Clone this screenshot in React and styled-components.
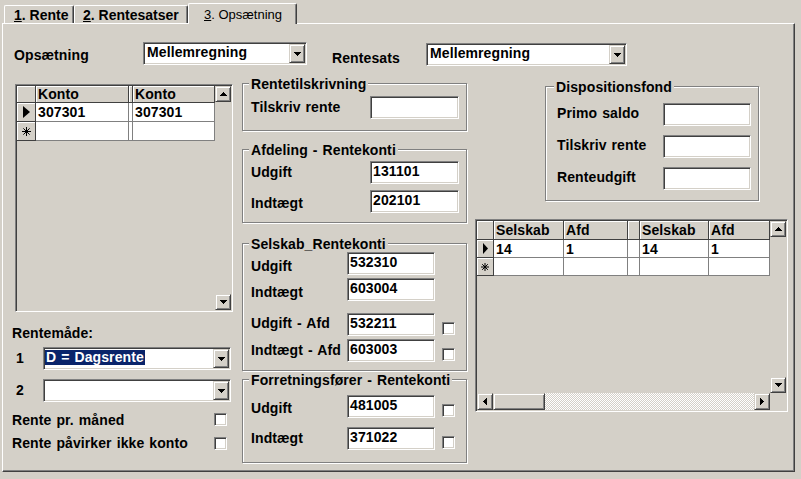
import React from 'react';
import styled, { createGlobalStyle, css } from 'styled-components';

const FACE = '#d4d0c8';

const GlobalStyle = createGlobalStyle`
  html, body {
    margin: 0;
    padding: 0;
    background: ${FACE};
  }
  body {
    font-family: "Liberation Sans", Arial, sans-serif;
    font-size: 14px;
    font-weight: bold;
    letter-spacing: 0.1px;
    word-spacing: 1px;
    color: #000;
  }
`;

// classic 3d borders
const sunken = css`
  box-sizing: border-box;
  border: 1px solid;
  border-color: #808080 #fff #fff #808080;
  box-shadow: inset 1px 1px 0 #404040, inset -1px -1px 0 ${FACE};
`;

const raised = css`
  box-sizing: border-box;
  border: 1px solid;
  border-color: ${FACE} #404040 #404040 ${FACE};
  box-shadow: inset 1px 1px 0 #fff, inset -1px -1px 0 #808080;
`;

const Screen = styled.div`
  width: 801px;
  height: 479px;
  overflow: hidden;
`;

/* Tabs */
const TabStrip = styled.div`
  display: flex;
  align-items: flex-end;
  height: 23px;
  padding-left: 4px;
  box-sizing: border-box;
  position: relative;
  z-index: 1;
`;

const Tab = styled.div`
  box-sizing: border-box;
  width: ${(p) => p.$w}px;
  height: ${(p) => (p.$active ? 21 : 18)}px;
  margin-bottom: ${(p) => (p.$active ? -1 : 0)}px;
  padding-left: ${(p) => p.$pl}px;
  background: ${FACE};
  border-left: 1px solid #fff;
  border-top: 1px solid #fff;
  border-right: 1px solid #404040;
  border-radius: 2px 2px 0 0;
  box-shadow: inset -1px 0 0 #808080;
  display: flex;
  align-items: center;
  white-space: nowrap;
  font-size: ${(p) => (p.$active ? 13 : 14)}px;
  font-weight: ${(p) => (p.$active ? 'normal' : 'bold')};
  letter-spacing: 0;
  word-spacing: 0;
`;

const Panel = styled.div`
  box-sizing: border-box;
  margin-left: 2px;
  width: 793px;
  height: 449px;
  border: 1px solid;
  border-color: #fff #404040 #404040 #fff;
  box-shadow: inset -1px -1px 0 #808080;
  display: flex;
  flex-direction: column;
`;

const TopRow = styled.div`
  display: flex;
  align-items: flex-start;
  height: 24px;
  margin-top: 18px;
  padding-left: 11px;
`;

const TopLabel = styled.div`
  width: ${(p) => p.$w}px;
  margin-top: ${(p) => p.$mt}px;
  margin-left: ${(p) => p.$ml || 0}px;
  line-height: 16px;
  white-space: nowrap;
  flex-shrink: 0;
`;

/* Combo box */
const Combo = styled.div`
  ${sunken};
  width: ${(p) => p.$w}px;
  height: 23px;
  margin-top: ${(p) => p.$mt || 0}px;
  padding: 1px;
  background: #fff;
  display: flex;
  align-items: stretch;
  flex-shrink: 0;
`;

const ComboText = styled.div`
  flex: 1;
  padding-top: 1px;
  padding-left: ${(p) => (p.$tight ? 0 : 2)}px;
  line-height: 15px;
  white-space: nowrap;
  overflow: hidden;
`;

const Selected = styled.span`
  display: inline-block;
  padding: 0 1px;
  background: #0a246a;
  color: #fff;
  line-height: 15px;
`;

const ArrowBtn = styled.div`
  ${raised};
  width: ${(p) => p.$w || 16}px;
  height: ${(p) => (p.$h ? `${p.$h}px` : 'auto')};
  background: ${FACE};
  display: flex;
  align-items: center;
  justify-content: center;
  flex-shrink: 0;
`;

const arrowPaths = {
  down: 'M0 0h7v1H0z M1 1h5v1H1z M2 2h3v1H2z M3 3h1v1H3z',
  up: 'M3 0h1v1H3z M2 1h3v1H2z M1 2h5v1H1z M0 3h7v1H0z',
  right: 'M0 0h1v7H0z M1 1h1v5H1z M2 2h1v3H2z M3 3h1v1H3z',
  left: 'M3 0h1v7H3z M2 1h1v5H2z M1 2h1v3H1z M0 3h1v1H0z',
};

function Arrow({ dir }) {
  const vertical = dir === 'up' || dir === 'down';
  return (
    <svg width={vertical ? 7 : 4} height={vertical ? 4 : 7} viewBox={vertical ? '0 0 7 4' : '0 0 4 7'}>
      <path d={arrowPaths[dir]} fill="#000" />
    </svg>
  );
}

function ComboBox({ width, value, selected, mt }) {
  return (
    <Combo $w={width} $mt={mt}>
      <ComboText $tight={selected}>
        {selected ? <Selected>{value}</Selected> : value}
      </ComboText>
      <ArrowBtn>
        <Arrow dir="down" />
      </ArrowBtn>
    </Combo>
  );
}

/* Columns */
const Columns = styled.div`
  display: flex;
  align-items: flex-start;
  padding-left: 9px;
`;

const LeftCol = styled.div`
  width: 221px;
  margin-top: 18px;
  display: flex;
  flex-direction: column;
`;

const MidCol = styled.div`
  width: 225px;
  margin-top: 17px;
  margin-left: 9px;
  display: flex;
  flex-direction: column;
`;

const RightCol = styled.div`
  width: 313px;
  margin-top: 20px;
  margin-left: 8px;
  display: flex;
  flex-direction: column;
`;

/* Data grid */
const GridFrame = styled.div`
  ${sunken};
  width: ${(p) => p.$w}px;
  height: ${(p) => p.$h}px;
  margin-left: ${(p) => p.$ml || 0}px;
  margin-top: ${(p) => p.$mt || 0}px;
  padding: 1px;
  background: ${FACE};
  display: grid;
  grid-template-columns: minmax(0, 1fr) 16px;
  grid-template-rows: ${(p) => (p.$hScroll ? 'minmax(0, 1fr) 17px' : 'minmax(0, 1fr)')};
`;

const GridTable = styled.div`
  display: flex;
  flex-direction: column;
  overflow: hidden;
`;

const GridRow = styled.div`
  display: flex;
  height: ${(p) => p.$h}px;
  flex-shrink: 0;
`;

const cellBase = css`
  box-sizing: border-box;
  width: ${(p) => (p.$w ? `${p.$w}px` : 'auto')};
  flex: ${(p) => (p.$w ? '0 0 auto' : '1 0 60px')};
  display: flex;
  align-items: center;
  padding-left: 2px;
  white-space: nowrap;
  overflow: hidden;
`;

const HeadCell = styled.div`
  ${cellBase};
  background: ${FACE};
  border-right: 1px solid #404040;
  border-bottom: 1px solid #404040;
  box-shadow: inset 1px 1px 0 #fff;
`;

const DataCell = styled.div`
  ${cellBase};
  background: #fff;
  border-right: 1px solid #808080;
  border-bottom: 1px solid #808080;
`;

const SelCell = styled.div`
  ${cellBase};
  padding-left: 0;
  justify-content: center;
  background: ${FACE};
  border-right: 1px solid #404040;
  border-bottom: 1px solid #404040;
  box-shadow: inset 1px 1px 0 #fff;
`;

const VScroll = styled.div`
  display: flex;
  flex-direction: column;
  background: ${FACE};
`;

const HScroll = styled.div`
  display: flex;
  background: ${FACE};
`;

const Track = styled.div`
  flex: 1;
  background: ${(p) =>
    p.$dither
      ? `repeating-conic-gradient(${FACE} 0% 25%, #fff 0% 50%) 0 0 / 2px 2px`
      : FACE};
`;

const Thumb = styled.div`
  ${raised};
  width: ${(p) => p.$w}px;
  background: ${FACE};
  flex-shrink: 0;
`;

const Corner = styled.div`
  background: ${FACE};
`;

function RowPointer({ w, h }) {
  return (
    <svg width={w} height={h} viewBox={`0 0 ${w} ${h}`}>
      <polygon points={`0,0 ${w},${h / 2} 0,${h}`} fill="#000" />
    </svg>
  );
}

function NewRowMark({ size }) {
  const s = size;
  const d = s * 0.15;
  return (
    <svg width={s} height={s} viewBox={`0 0 ${s} ${s}`}>
      <path
        d={`M${s / 2} 0V${s} M0 ${s / 2}H${s} M${d} ${d}L${s - d} ${s - d} M${s - d} ${d}L${d} ${s - d}`}
        stroke="#000"
        strokeWidth="1"
        fill="none"
      />
    </svg>
  );
}

function DataGrid({ width, height, ml, mt, selW, columns, rows, headerH, rowH, hScroll, markSize, pointer }) {
  return (
    <GridFrame $w={width} $h={height} $ml={ml} $mt={mt} $hScroll={hScroll}>
      <GridTable>
        <GridRow $h={headerH}>
          <SelCell $w={selW} />
          {columns.map((c, i) => (
            <HeadCell key={i} $w={c.width}>
              {c.label}
            </HeadCell>
          ))}
        </GridRow>
        {rows.map((r, ri) => (
          <GridRow key={ri} $h={rowH}>
            <SelCell $w={selW}>
              {r ? <RowPointer w={pointer[0]} h={pointer[1]} /> : <NewRowMark size={markSize} />}
            </SelCell>
            {columns.map((c, i) => (
              <DataCell key={i} $w={c.width}>
                {r ? r[i] : ''}
              </DataCell>
            ))}
          </GridRow>
        ))}
      </GridTable>
      <VScroll>
        <ArrowBtn $h={16}>
          <Arrow dir="up" />
        </ArrowBtn>
        <Track />
        <ArrowBtn $h={16}>
          <Arrow dir="down" />
        </ArrowBtn>
      </VScroll>
      {hScroll && (
        <>
          <HScroll>
            <ArrowBtn>
              <Arrow dir="left" />
            </ArrowBtn>
            <Thumb $w={52} />
            <Track $dither />
            <ArrowBtn>
              <Arrow dir="right" />
            </ArrowBtn>
          </HScroll>
          <Corner />
        </>
      )}
    </GridFrame>
  );
}

/* Left column bits */
const SectionLabel = styled.div`
  margin-top: ${(p) => p.$mt}px;
  line-height: 16px;
`;

const ComboRow = styled.div`
  display: flex;
  align-items: flex-start;
  height: 23px;
  margin-top: ${(p) => p.$mt}px;
  padding-left: 4px;
`;

const NumLabel = styled.div`
  width: 27px;
  margin-top: 3px;
  line-height: 16px;
  flex-shrink: 0;
`;

const CheckRow = styled.div`
  display: flex;
  align-items: flex-start;
  justify-content: space-between;
  margin-top: ${(p) => p.$mt}px;
  padding-right: 6px;
  line-height: 16px;
`;

const CheckBox = styled.div`
  ${sunken};
  width: 13px;
  height: 13px;
  background: #fff;
  flex-shrink: 0;
  margin-top: ${(p) => p.$mt || 0}px;
`;

/* Group boxes */
const GroupBox = styled.div`
  box-sizing: border-box;
  width: ${(p) => (p.$w ? `${p.$w}px` : '100%')};
  height: ${(p) => p.$h}px;
  margin-top: ${(p) => p.$mt || 0}px;
  margin-left: ${(p) => p.$ml || 0}px;
  border: 1px solid #808080;
  box-shadow: 1px 1px 0 #fff, inset 1px 1px 0 #fff;
  display: flex;
  flex-direction: column;
`;

const GroupTitle = styled.div`
  align-self: flex-start;
  margin: -8px 0 0 ${(p) => p.$ml || 6}px;
  padding: 0 2px;
  background: ${FACE};
  line-height: 16px;
  white-space: nowrap;
`;

const FieldRow = styled.div`
  display: flex;
  align-items: flex-start;
  height: 23px;
  margin-top: ${(p) => p.$mt}px;
  padding-left: ${(p) => p.$pl || 8}px;
`;

const FieldLabel = styled.div`
  width: ${(p) => p.$w}px;
  margin-top: ${(p) => 3 + (p.$dy || 0)}px;
  line-height: 16px;
  white-space: nowrap;
  flex-shrink: 0;
`;

const TextBox = styled.div`
  ${sunken};
  width: ${(p) => p.$w || 88}px;
  height: 23px;
  padding: 1px 1px 1px 2px;
  background: #fff;
  line-height: 16px;
  white-space: nowrap;
  overflow: hidden;
  flex-shrink: 0;
`;

const RowCheck = styled(CheckBox)`
  align-self: flex-end;
  margin-bottom: 1px;
  margin-left: 7px;
`;

function Field({ label, value, labelW, boxW, mt, dy, pl, check }) {
  return (
    <FieldRow $mt={mt} $pl={pl}>
      <FieldLabel $w={labelW} $dy={dy}>
        {label}
      </FieldLabel>
      <TextBox $w={boxW}>{value}</TextBox>
      {check && <RowCheck />}
    </FieldRow>
  );
}

const kontoColumns = [
  { label: 'Konto', width: 93 },
  { label: '', width: 4 },
  { label: 'Konto' },
];

const selskabColumns = [
  { label: 'Selskab', width: 70 },
  { label: 'Afd', width: 64 },
  { label: '', width: 12 },
  { label: 'Selskab', width: 69 },
  { label: 'Afd' },
];

export default function App() {
  return (
    <Screen>
      <GlobalStyle />
      <TabStrip>
        <Tab $w={70} $pl={9}>
          <span>
            <u>1</u>. Rente
          </span>
        </Tab>
        <Tab $w={114} $pl={8}>
          <span>
            <u>2</u>. Rentesatser
          </span>
        </Tab>
        <Tab $w={109} $pl={15} $active>
          <span>
            <u>3</u>. Opsætning
          </span>
        </Tab>
      </TabStrip>

      <Panel>
        <TopRow>
          <TopLabel $w={129} $mt={5}>
            Opsætning
          </TopLabel>
          <ComboBox width={164} value="Mellemregning" />
          <TopLabel $w={94} $mt={8} $ml={25}>
            Rentesats
          </TopLabel>
          <ComboBox width={201} value="Mellemregning" mt={1} />
        </TopRow>

        <Columns>
          <LeftCol>
            <DataGrid
              width={218}
              height={228}
              ml={3}
              selW={19}
              columns={kontoColumns}
              rows={[['307301', '', '307301'], null]}
              headerH={17}
              rowH={19}
              markSize={9}
              pointer={[7, 12]}
            />
            <SectionLabel $mt={13}>Rentemåde:</SectionLabel>
            <ComboRow $mt={6}>
              <NumLabel>1</NumLabel>
              <ComboBox width={188} value="D = Dagsrente" selected />
            </ComboRow>
            <ComboRow $mt={9}>
              <NumLabel>2</NumLabel>
              <ComboBox width={188} value="" />
            </ComboRow>
            <CheckRow $mt={10}>
              <span>Rente pr. måned</span>
              <CheckBox $mt={1} />
            </CheckRow>
            <CheckRow $mt={7}>
              <span>Rente påvirker ikke konto</span>
              <CheckBox $mt={2} />
            </CheckRow>
          </LeftCol>

          <MidCol>
            <GroupBox $h={48}>
              <GroupTitle>Rentetilskrivning</GroupTitle>
              <Field label="Tilskriv rente" value="" labelW={119} boxW={89} mt={4} />
            </GroupBox>

            <GroupBox $h={74} $mt={18}>
              <GroupTitle>Afdeling - Rentekonti</GroupTitle>
              <Field label="Udgift" value="131101" labelW={119} boxW={89} mt={3} />
              <Field label="Indtægt" value="202101" labelW={119} boxW={89} mt={6} dy={2} />
            </GroupBox>

            <GroupBox $h={128} $mt={20}>
              <GroupTitle>Selskab_Rentekonti</GroupTitle>
              <Field label="Udgift" value="532310" labelW={96} mt={0} dy={3} />
              <Field label="Indtægt" value="603004" labelW={96} mt={3} dy={3} />
              <Field label="Udgift - Afd" value="532211" labelW={96} mt={12} dy={-1} check />
              <Field label="Indtægt - Afd" value="603003" labelW={96} mt={3} check />
            </GroupBox>

            <GroupBox $h={84} $mt={8}>
              <GroupTitle>Forretningsfører - Rentekonti</GroupTitle>
              <Field label="Udgift" value="481005" labelW={96} mt={7} dy={2} check />
              <Field label="Indtægt" value="371022" labelW={96} mt={9} check />
            </GroupBox>
          </MidCol>

          <RightCol>
            <GroupBox $w={214} $h={115} $ml={70}>
              <GroupTitle $ml={8}>Dispositionsfond</GroupTitle>
              <Field label="Primo saldo" value="" labelW={106} pl={11} mt={8} dy={-1} />
              <Field label="Tilskriv rente" value="" labelW={106} pl={11} mt={9} dy={-1} />
              <Field label="Renteudgift" value="" labelW={106} pl={11} mt={9} dy={-1} />
            </GroupBox>

            <DataGrid
              width={313}
              height={193}
              mt={18}
              selW={17}
              columns={selskabColumns}
              rows={[['14', '1', '', '14', '1'], null]}
              headerH={19}
              rowH={18}
              hScroll
              markSize={8}
              pointer={[5, 11]}
            />
          </RightCol>
        </Columns>
      </Panel>
    </Screen>
  );
}
